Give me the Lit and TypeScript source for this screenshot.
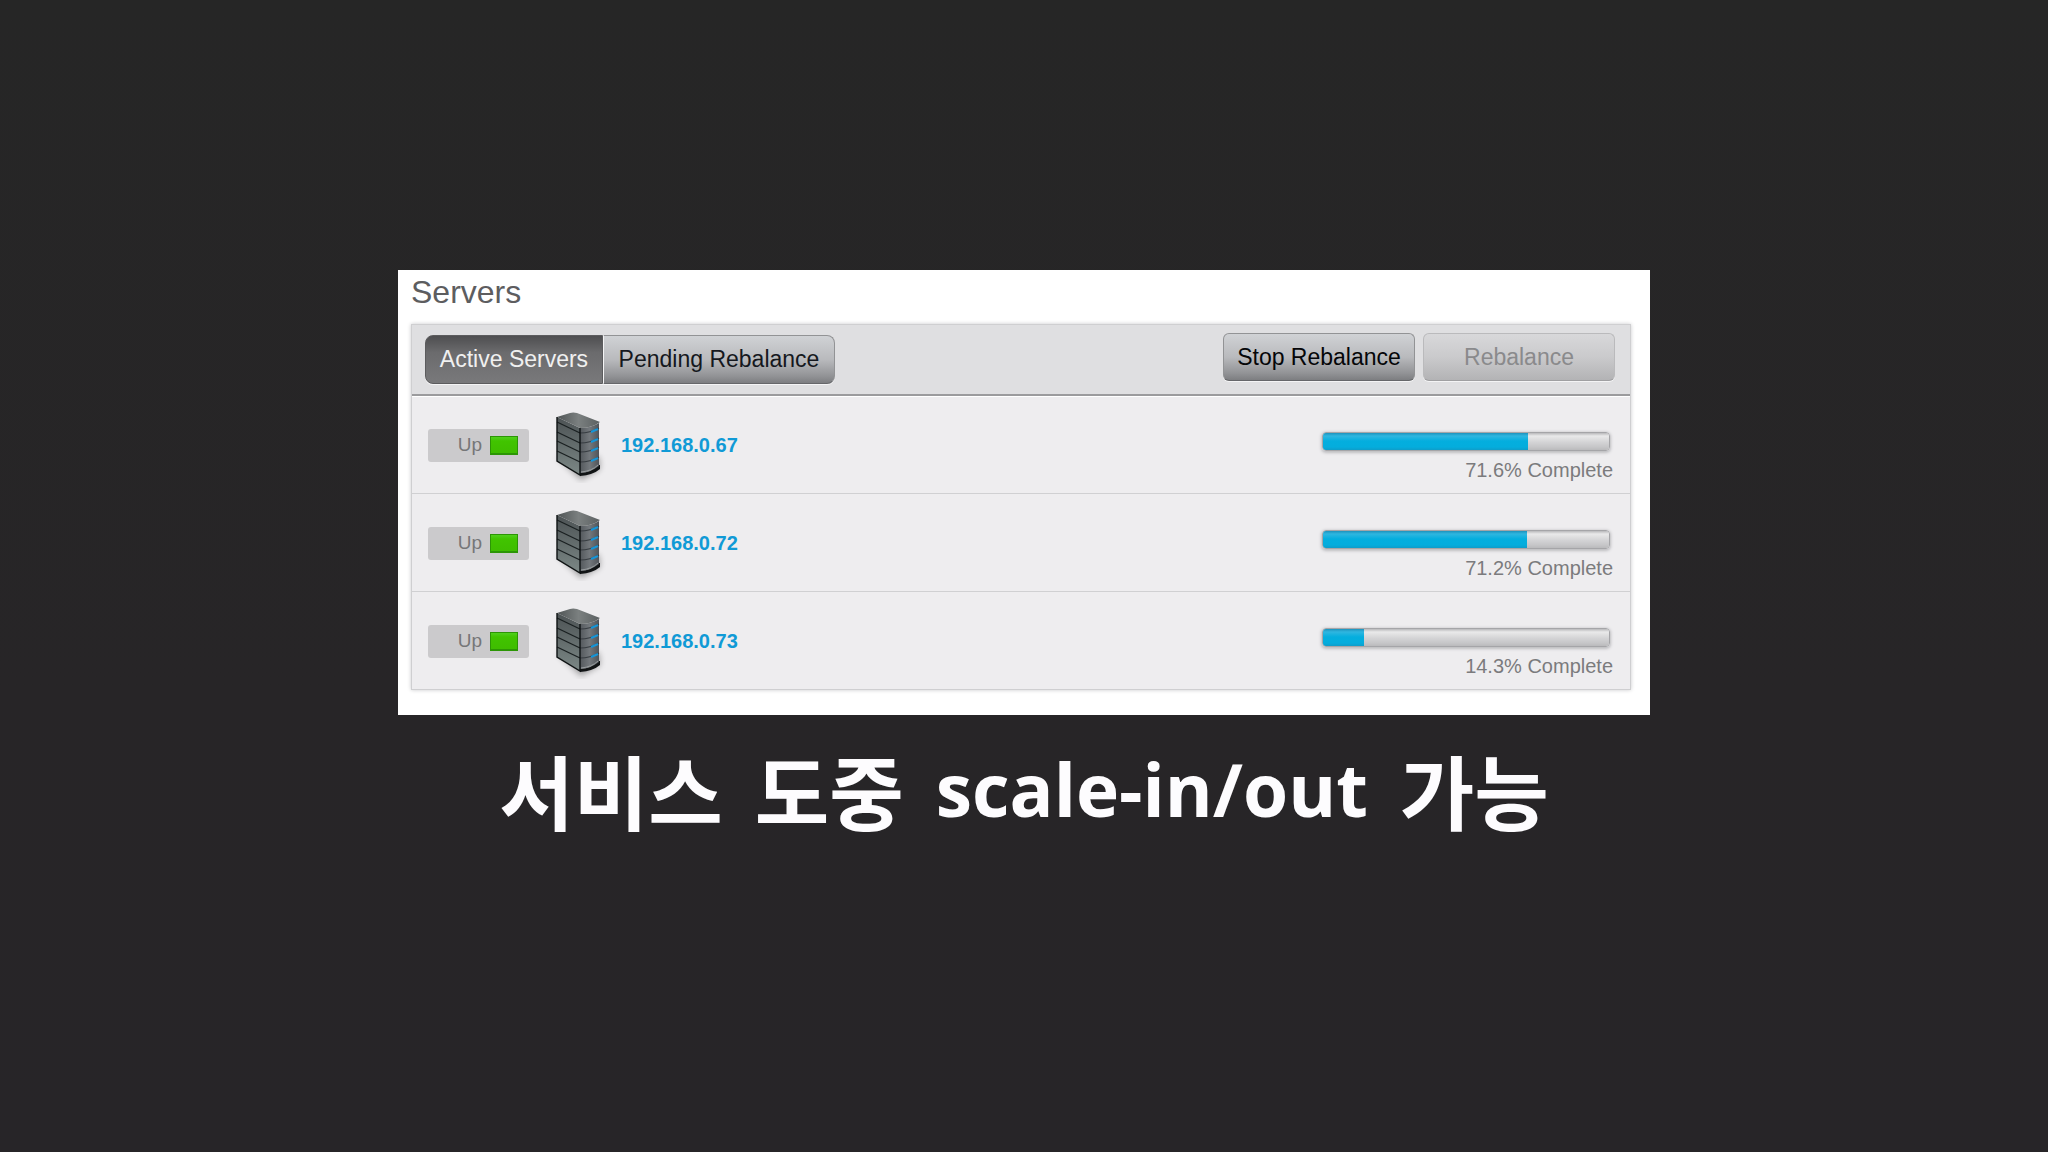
import { LitElement, html, css, svg } from "lit";
import { customElement, property } from "lit/decorators.js";

interface Server {
  address: string;
  complete: number;
}

const servers: Server[] = [
  { address: "192.168.0.67", complete: 71.6 },
  { address: "192.168.0.72", complete: 71.2 },
  { address: "192.168.0.73", complete: 14.3 },
];

// Seams between drive bays: height on the left edge of the case.
const bays = [15, 25, 34, 44];

@customElement("server-icon")
class ServerIcon extends LitElement {
  static styles = css`
    :host {
      display: block;
    }
    .icon {
      display: block;
      width: 56px;
      height: 76px;
    }
  `;

  render() {
    return html`
      <svg class="icon" viewBox="0 0 56 76" aria-hidden="true">
        <defs>
          <linearGradient id="side" x1="0" y1="0" x2="0" y2="1">
            <stop offset="0" stop-color="#4c5254" />
            <stop offset="1" stop-color="#7c8886" />
          </linearGradient>
          <linearGradient id="top" x1="0" y1="0" x2="1" y2="0">
            <stop offset="0" stop-color="#4f5455" />
            <stop offset="0.5" stop-color="#7b8080" />
            <stop offset="1" stop-color="#5b6061" />
          </linearGradient>
          <linearGradient id="front" x1="0" y1="0" x2="1" y2="0">
            <stop offset="0" stop-color="#54595d" />
            <stop offset="0.5" stop-color="#73787c" />
            <stop offset="1" stop-color="#505459" />
          </linearGradient>
          <filter id="soft" x="-50%" y="-50%" width="200%" height="200%">
            <feGaussianBlur stdDeviation="3" />
          </filter>
        </defs>
        <path d="M6 50 L30 73 L49 62 L48 50 Z" fill="#000" opacity="0.35" filter="url(#soft)" />
        <path d="M29 66 Q42 65 47 58 L49 58 V62 Q42 68 29 69 Z" fill="#111415" />
        <path d="M6 10 L29 21 V68 L6 54 Z" fill="url(#side)" />
        <path d="M29 21 Q40 21 48 16 V59 Q40 65 29 66 Z" fill="url(#front)" />
        <path d="M6 10 L19 6 Q22 5 26 6 L49 15 Q41 21 29 21 Z" fill="url(#top)" />
        ${bays.map(
          (y) => svg`
            <path d="M6 ${y} L29 ${y + 11}" stroke="#1a2021" stroke-width="1.3" fill="none" />
            <path d="M29 ${y + 11} Q39 ${y + 11} 48 ${y + 6}" stroke="#363c40" stroke-width="1.1" fill="none" />
            <path d="M40 ${y + 10} L47 ${y + 7}" stroke="#1595d8" stroke-width="2" fill="none" />
          `,
        )}
        <path d="M6 10 V54 L29 68 V21" stroke="#0e1213" stroke-width="1.4" fill="none" />
        <path d="M30 65 Q41 64 47 58" stroke="#989d9f" stroke-width="1" fill="none" />
      </svg>
    `;
  }
}

@customElement("server-row")
class ServerRow extends LitElement {
  @property({ attribute: false }) server!: Server;

  static styles = css`
    :host {
      display: block;
    }
    .row {
      display: flex;
      align-items: center;
      box-sizing: border-box;
      height: 97px;
      padding: 1px 17px 0 16px;
    }
    .status {
      display: flex;
      align-items: center;
      justify-content: flex-end;
      gap: 8px;
      box-sizing: border-box;
      width: 101px;
      height: 33px;
      padding: 0 11px;
      border-radius: 3px;
      background: #cbcacc;
      color: #767678;
      font-size: 19px;
    }
    .lamp {
      box-sizing: border-box;
      width: 28px;
      height: 19px;
      border: 1px solid #2c9605;
      border-bottom-width: 2px;
      background: linear-gradient(#4fd01c 0, #41c400 4px, #3fbd00);
    }
    .icon {
      margin: 0 14px 0 22px;
    }
    .address {
      color: #109ad6;
      font-size: 20px;
      font-weight: bold;
      text-decoration: none;
    }
    .state {
      display: flex;
      flex-direction: column;
      align-items: flex-end;
      gap: 7px;
      margin-left: auto;
      padding-top: 24px;
      color: #7b7b7d;
      font-size: 20px;
      line-height: 24px;
    }
    .bar {
      appearance: none;
      display: block;
      box-sizing: border-box;
      width: 288px;
      height: 19px;
      margin-right: 3px;
      border: 1px solid #a5a5a8;
      border-radius: 4px;
      overflow: hidden;
      background: transparent;
      box-shadow: 0 1px 3px 1px #bdbdc0;
    }
    .bar::-webkit-progress-bar {
      background: linear-gradient(#b9b9bb 0, #e9e9ea 3px, #d4d4d6 9px, #c6c6c8 14px, #bababc);
    }
    .bar::-webkit-progress-value {
      background: linear-gradient(#1d93bd 0, #2fb6e0 3px, #04aede 8px, #04addd 14px, #0e9dca);
    }
  `;

  render() {
    const { address, complete } = this.server;
    return html`
      <div class="row">
        <div class="status"><span>Up</span><span class="lamp"></span></div>
        <server-icon class="icon"></server-icon>
        <a class="address" href="#${address}">${address}</a>
        <div class="state">
          <progress class="bar" id="bar" max="100" value=${complete}></progress>
          <label for="bar">${complete}% Complete</label>
        </div>
      </div>
    `;
  }
}

@customElement("app-root")
class AppRoot extends LitElement {
  static styles = css`
    :host {
      display: block;
      font-family: "Liberation Sans", Arial, sans-serif;
    }
    .slide {
      display: flex;
      flex-direction: column;
      align-items: center;
      box-sizing: border-box;
      min-height: 100vh;
      padding: 270px 24px 24px;
      background: linear-gradient(#262626, #272527 60%, #272528);
    }
    .panel {
      box-sizing: border-box;
      width: 100%;
      max-width: 1252px;
      padding: 4px 19px 25px 13px;
      background: #fff;
    }
    .title {
      margin: 0 0 14px;
      color: #5d5d5f;
      font-size: 32px;
      font-weight: normal;
      line-height: 36px;
    }
    .card {
      border: 1px solid #cfcfd1;
      background: #eeedef;
      box-shadow: 0 0 4px #c9c9cb;
    }
    .toolbar {
      display: flex;
      justify-content: space-between;
      box-sizing: border-box;
      height: 71px;
      padding: 8px 15px 0 13px;
      border-bottom: 2px solid #9b9b9d;
      background: #dfdfe1;
      box-shadow: 0 1px #fff;
    }
    .tabs {
      display: flex;
      height: 49px;
      margin-top: 2px;
    }
    .actions {
      display: flex;
      gap: 8px;
      height: 48px;
    }
    .button {
      box-sizing: border-box;
      margin: 0;
      padding: 0 8px;
      border: 1px solid #929395;
      border-bottom-color: #66676a;
      border-radius: 6px;
      background: linear-gradient(#d0d2d5, #b9babd 50%, #929396 85%, #7d7e81);
      box-shadow: 0 1px #f4f4f5;
      color: #050608;
      font-family: inherit;
      font-size: 23px;
      white-space: nowrap;
    }
    .tab {
      width: 232px;
      border-left: 1px solid #f4f4f5;
      border-radius: 0 8px 8px 0;
      color: #15181d;
    }
    .tab.active {
      width: 178px;
      border-color: #5c5c5e;
      border-radius: 8px 0 0 8px;
      background: linear-gradient(#4e4e50, #6b6b6d 35%, #79797b);
      color: #f0f0f0;
    }
    .action {
      width: 192px;
    }
    .action:disabled {
      border-color: #bababc;
      border-bottom-color: #a0a0a2;
      background: linear-gradient(#d8d8da, #cacacc 50%, #b3b3b5);
      color: #8a8a8c;
    }
    .list {
      margin: 0;
      padding: 0;
      list-style: none;
    }
    .item + .item {
      border-top: 1px solid #d0d0d2;
    }
    .caption {
      display: flex;
      flex-wrap: wrap;
      align-items: center;
      justify-content: center;
      column-gap: 32px;
      margin: 22px 0 0;
      color: #fdfcfe;
      font-family: "Noto Sans CJK KR", sans-serif;
      font-size: 81px;
      font-weight: 700;
      line-height: 104px;
    }
    .latin {
      font-family: "Open Sans", sans-serif;
      font-size: 73px;
    }
  `;

  render() {
    return html`
      <main class="slide">
        <section class="panel">
          <h2 class="title">Servers</h2>
          <div class="card">
            <div class="toolbar">
              <div class="tabs">
                <button class="button tab active" type="button">Active Servers</button>
                <button class="button tab" type="button">Pending Rebalance</button>
              </div>
              <div class="actions">
                <button class="button action" type="button">Stop Rebalance</button>
                <button class="button action" type="button" disabled>Rebalance</button>
              </div>
            </div>
            <ul class="list">
              ${servers.map(
                (server) => html`<li class="item"><server-row .server=${server}></server-row></li>`,
              )}
            </ul>
          </div>
        </section>
        <h1 class="caption" lang="ko">
          <span>서비스</span>
          <span>도중</span>
          <span class="latin">scale-in/out</span>
          <span>가능</span>
        </h1>
      </main>
    `;
  }
}
